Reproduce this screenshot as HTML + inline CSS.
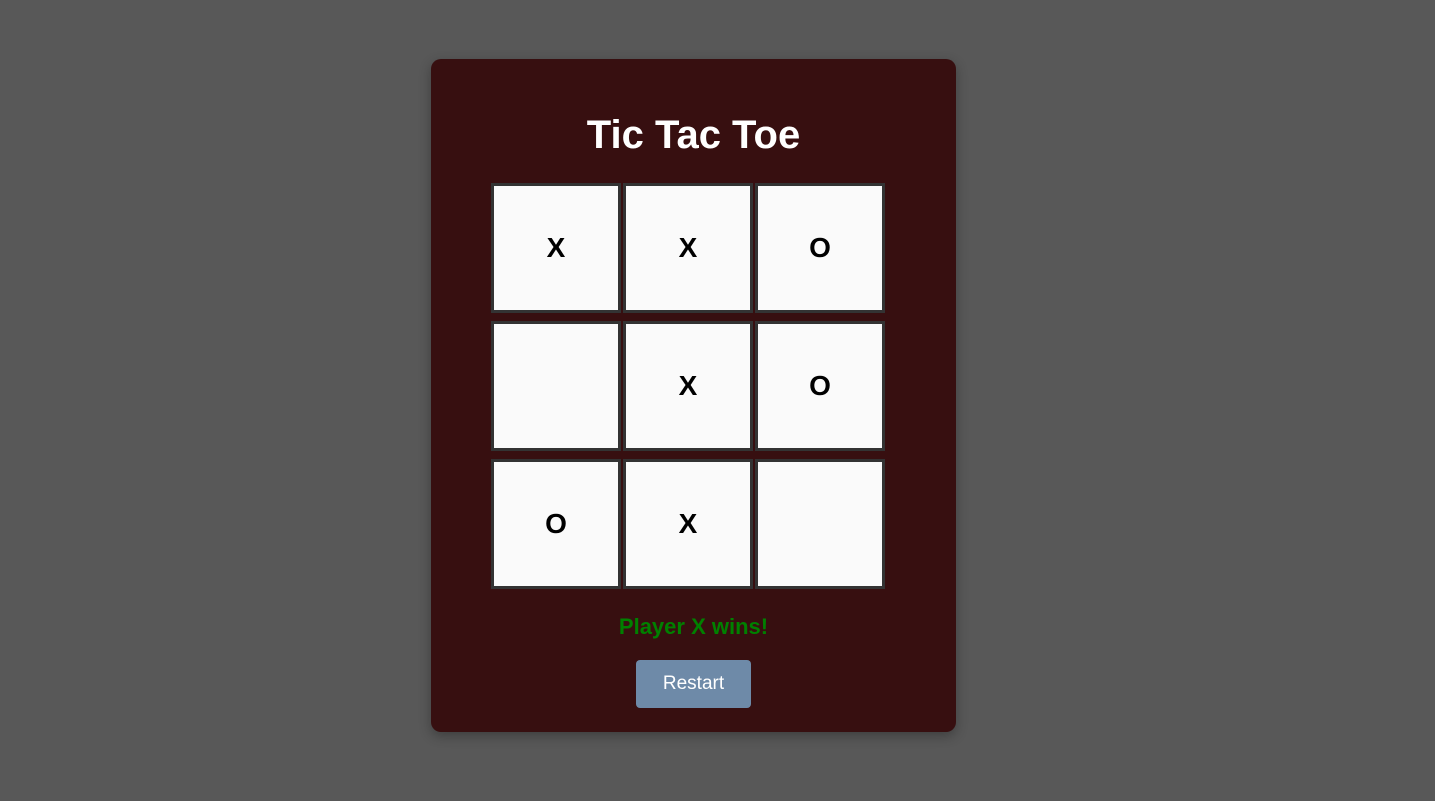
<!DOCTYPE html>
<html><head><style>
html,body{margin:0;padding:0;width:1435px;height:801px;background:#585858;overflow:hidden;font-family:"Liberation Sans",sans-serif}
.card{position:absolute;left:431px;top:59px;width:525px;height:673px;background:#370f10;border-radius:10px;box-shadow:0 4px 12px rgba(0,0,0,.3)}
h1{position:absolute;left:431px;width:525px;top:112px;margin:0;text-align:center;color:#fff;font-size:40px;font-weight:bold;line-height:46px}
.c{position:absolute;width:124px;height:124px;border:3px solid #333;background:#fafafa;box-sizing:content-box;font-weight:bold;font-size:28px;line-height:124px;text-align:center;color:#000}
.s{position:absolute;left:431px;width:525px;top:614px;text-align:center;color:#008000;font-weight:bold;font-size:22px;line-height:26px}
.b{position:absolute;left:636px;top:660px;width:115px;height:48px;background:#6e8aa8;border-radius:4px;color:#fff;font-size:19px;line-height:48px;text-align:center}
</style></head><body>
<div class="card"></div>
<h1>Tic Tac Toe</h1>
<div class="c" style="left:491px;top:183px">X</div>
<div class="c" style="left:623px;top:183px">X</div>
<div class="c" style="left:755px;top:183px">O</div>
<div class="c" style="left:491px;top:321px"></div>
<div class="c" style="left:623px;top:321px">X</div>
<div class="c" style="left:755px;top:321px">O</div>
<div class="c" style="left:491px;top:459px">O</div>
<div class="c" style="left:623px;top:459px">X</div>
<div class="c" style="left:755px;top:459px"></div>
<div class="s">Player X wins!</div>
<div class="b">Restart</div>
</body></html>
